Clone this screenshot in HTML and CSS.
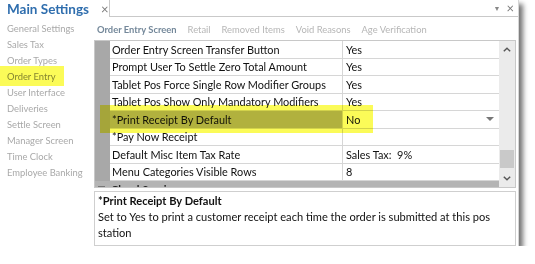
FILE: index.html
```html
<!DOCTYPE html>
<html>
<head>
    <title>Main Settings</title>
    <link rel="stylesheet" href="styles.css">
</head>
<body>
    <div class="window">
        <div class="header">
            <div class="title">Main Settings <span class="closeX">&times;</span></div>
            <div class="panelHead">
                <span class="pin">&#9660;</span>
                <span class="closeX">&times;</span>
            </div>
        </div>
        <div class="content">
            <ul class="nav">
                <li>General Settings</li>
                <li>Sales Tax</li>
                <li>Order Types</li>
                <li class="activo">Order Entry</li>
                <li>User Interface</li>
                <li>Deliveries</li>
                <li>Settle Screen</li>
                <li>Manager Screen</li>
                <li>Time Clock</li>
                <li>Employee Banking</li>
            </ul>
            <div class="main">
                <div class="tabs">
                    <span class="tab activo">Order Entry Screen</span>
                    <span class="tab">Retail</span>
                    <span class="tab">Removed Items</span>
                    <span class="tab">Void Reasons</span>
                    <span class="tab">Age Verification</span>
                </div>
                <div class="grid">
                    <div class="rows">
                        <div class="row"><div class="gutter"></div><div class="name">Order Entry Screen Transfer Button</div><div class="value">Yes</div></div>
                        <div class="row"><div class="gutter"></div><div class="name">Prompt User To Settle Zero Total Amount</div><div class="value">Yes</div></div>
                        <div class="row"><div class="gutter"></div><div class="name">Tablet Pos Force Single Row Modifier Groups</div><div class="value">Yes</div></div>
                        <div class="row"><div class="gutter"></div><div class="name">Tablet Pos Show Only Mandatory Modifiers</div><div class="value">Yes</div></div>
                        <div class="row sel"><div class="gutter"></div><div class="name">*Print Receipt By Default</div><div class="value">No<span class="drop"></span></div></div>
                        <div class="row"><div class="gutter"></div><div class="name">*Pay Now Receipt</div><div class="value"></div></div>
                        <div class="row"><div class="gutter"></div><div class="name">Default Misc Item Tax Rate</div><div class="value">Sales Tax:&nbsp; 9%</div></div>
                        <div class="row"><div class="gutter"></div><div class="name">Menu Categories Visible Rows</div><div class="value">8</div></div>
                        <div class="grupo"><span class="menos"></span>Cloud Service</div>
                    </div>
                    <div class="scroll">
                        <div class="flecha">
                            <svg width="8" height="5" viewBox="0 0 8 5"><path d="M0.8 4.3 L4 1.2 L7.2 4.3" fill="none" stroke="#555" stroke-width="1.4"/></svg>
                        </div>
                        <div class="pista"><div class="thumb"></div></div>
                        <div class="flecha">
                            <svg width="8" height="5" viewBox="0 0 8 5"><path d="M0.8 0.7 L4 3.8 L7.2 0.7" fill="none" stroke="#555" stroke-width="1.4"/></svg>
                        </div>
                    </div>
                </div>
                <div class="desc">
                    <div class="descTitulo">*Print Receipt By Default</div>
                    <div>Set to Yes to print a customer receipt each time the order is submitted at this pos station</div>
                </div>
            </div>
        </div>
        <span class="marcador marcaNav"></span>
        <span class="marcador marcaFila"></span>
    </div>
</body>
</html>
```

FILE: styles.css
```css
* {
    box-sizing: border-box;
}

body {
    margin: 0;
    padding: 0;
    font-family: Lato, "Liberation Sans", Arial, sans-serif;
    background: #fff;
}

.window {
    position: relative;
    width: 519px;
    height: 246px;
    background: #fff;
    border-right: 1px solid #d6d6d6;
    box-shadow: 4px 4px 5px rgba(0, 0, 0, 0.55);
    display: flex;
    flex-direction: column;
}

.header {
    display: flex;
    height: 17px;
}

.title {
    width: 109px;
    padding-left: 7px;
    display: flex;
    align-items: center;
    white-space: nowrap;
    color: #2f6eae;
    font-weight: bold;
    font-size: 13.5px;
}

.title .closeX {
    margin-left: 12px;
    font-weight: normal;
}

.closeX {
    color: #7a7a7a;
    font-size: 13px;
}

.panelHead {
    flex: 1;
    border-left: 1px solid #c9c9c9;
    border-bottom: 1px solid #c9c9c9;
    display: flex;
    align-items: center;
    justify-content: flex-end;
    gap: 6px;
    padding-right: 4px;
}

.pin {
    color: #888;
    font-size: 7px;
}

.content {
    flex: 1;
    display: flex;
}

.nav {
    width: 94px;
    margin: 0;
    padding: 4px 0 0 7px;
    list-style: none;
}

.nav li {
    height: 16px;
    line-height: 16px;
    font-size: 9.4px;
    color: #a9a9a9;
    white-space: nowrap;
}

.nav li.activo {
    color: #888;
}

.main {
    flex: 1;
    display: flex;
    flex-direction: column;
    padding-right: 2px;
}

.tabs {
    height: 23px;
    padding: 2px 0 0 3px;
    display: flex;
    align-items: center;
    gap: 11px;
    font-size: 9.4px;
    color: #b6b6b6;
}

.tab.activo {
    color: #74889a;
    font-weight: bold;
}

.grid {
    height: 148px;
    border: 1px solid #c8c8c8;
    display: flex;
}

.rows {
    flex: 1;
    overflow: hidden;
}

.row {
    display: flex;
    height: 17.5px;
    font-size: 10.9px;
    color: #111;
}

.gutter {
    width: 15px;
    background: #a8a8a8;
}

.name {
    width: 233px;
    padding-left: 2px;
    border-bottom: 1px solid #d6d6d6;
    border-right: 1px solid #d6d6d6;
    display: flex;
    align-items: center;
    white-space: nowrap;
}

.value {
    flex: 1;
    padding-left: 3px;
    border-bottom: 1px solid #d6d6d6;
    display: flex;
    align-items: center;
    justify-content: space-between;
}

.sel .name {
    background: #b4b4b4;
}

.drop {
    width: 0;
    height: 0;
    margin-right: 5px;
    border-left: 4px solid transparent;
    border-right: 4px solid transparent;
    border-top: 4px solid #777;
}

.grupo {
    height: 17.5px;
    background: #b4b4b4;
    display: flex;
    align-items: center;
    padding-left: 3px;
    font-size: 10.9px;
    font-weight: bold;
    color: #222;
}

.menos {
    width: 7px;
    height: 7px;
    margin-right: 6px;
    border: 1px solid #777;
    background: #eee;
}

.scroll {
    width: 16px;
    background: #ebebeb;
    display: flex;
    flex-direction: column;
}

.flecha {
    height: 17px;
    display: flex;
    align-items: center;
    justify-content: center;
}

.pista {
    flex: 1;
}

.thumb {
    margin: 92px 1px 0 1px;
    height: 18px;
    background: #c9c9c9;
}

.desc {
    flex: 1;
    margin-top: 3px;
    border: 1px solid #cfcfcf;
    padding: 1px 3px;
    font-size: 11.1px;
    line-height: 16px;
    color: #111;
}

.descTitulo {
    font-weight: bold;
}

.marcador {
    position: absolute;
    background: #fbfb58;
    mix-blend-mode: multiply;
}

.marcaNav {
    left: 0;
    top: 66px;
    width: 64px;
    height: 20px;
}

.marcaFila {
    left: 100px;
    top: 105px;
    width: 273px;
    height: 28px;
}
```
